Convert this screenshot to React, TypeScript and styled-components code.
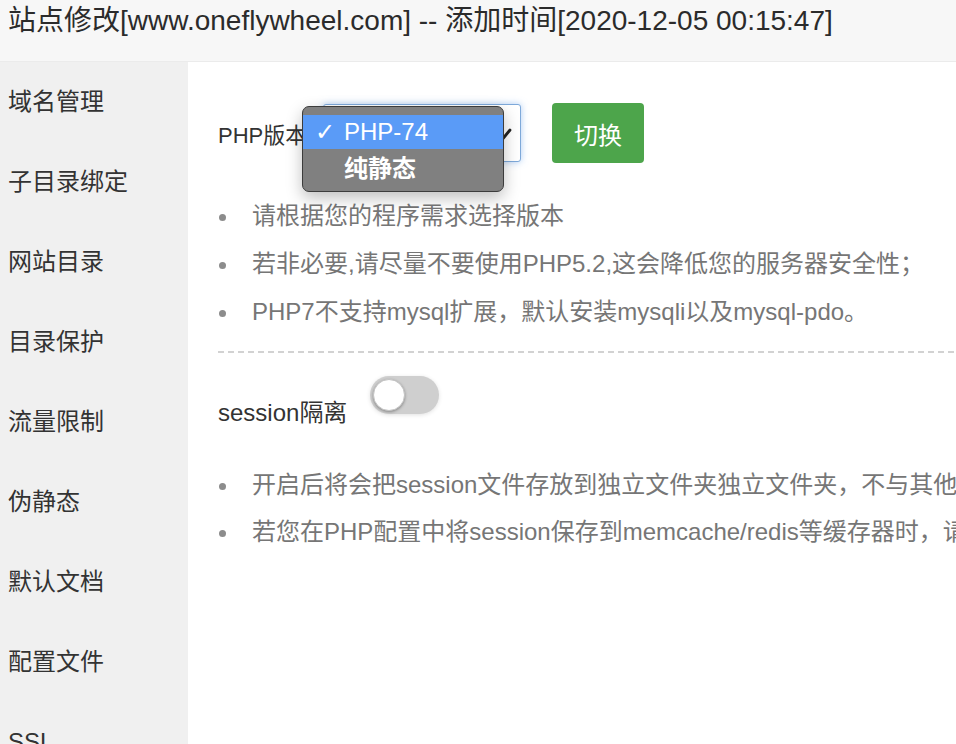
import React from "react";
import styled, { createGlobalStyle } from "styled-components";

const GlobalStyle = createGlobalStyle`
  html, body {
    margin: 0;
    padding: 0;
    background: #ffffff;
    overflow: hidden;
  }
  body {
    font-family: "Liberation Sans", Arial, "Noto Sans CJK SC", sans-serif;
    color: #333;
  }
  * {
    box-sizing: border-box;
  }
`;

const Page = styled.div`
  width: 956px;
  height: 744px;
  display: flex;
  flex-direction: column;
  overflow: hidden;
`;

const Header = styled.div`
  height: 62px;
  flex-shrink: 0;
  background: #f7f7f7;
  border-bottom: 1px solid #ebebeb;
  padding: 1px 0 0 8px;
`;

const Title = styled.h1`
  margin: 0;
  font-size: 28px;
  font-weight: normal;
  line-height: 40px;
  color: #2b2b2b;
  white-space: nowrap;
`;

const Body = styled.div`
  flex: 1;
  display: flex;
  min-height: 0;
`;

const Sidebar = styled.ul`
  width: 188px;
  flex-shrink: 0;
  margin: 0;
  padding: 0;
  list-style: none;
  background: #f0f0f0;
`;

const SideItem = styled.li`
  height: 80px;
  line-height: 80px;
  padding-left: 8px;
  font-size: 24px;
  color: #333;
  white-space: nowrap;
`;

const Content = styled.div`
  flex: 1;
  padding: 41px 0 0 30px;
  min-width: 0;
`;

const VersionRow = styled.div`
  display: flex;
  align-items: center;
`;

const Label = styled.span<{ $width?: number; $size?: number }>`
  font-size: ${(p) => p.$size ?? 24}px;
  color: #333;
  white-space: nowrap;
  ${(p) => (p.$width ? `width: ${p.$width}px;` : "")}
`;

const SelectBox = styled.div`
  position: relative;
  width: 198px;
  height: 58px;
  border: 1px solid #7ea9da;
  border-radius: 3px;
  box-shadow: 0 0 7px rgba(102, 160, 233, 0.55);
  background: #fff;
`;

const Chevron = styled.svg`
  position: absolute;
  right: 8px;
  top: 23px;
`;

const Popup = styled.div`
  position: absolute;
  left: -22px;
  top: 1px;
  width: 202px;
  height: 86px;
  padding: 8px 0;
  background: #808080;
  border: 1px solid #3c3c3c;
  border-radius: 7px;
  box-shadow: 0 6px 16px rgba(0, 0, 0, 0.25);
  z-index: 5;
`;

const Option = styled.div<{ $active?: boolean }>`
  height: 34px;
  display: flex;
  align-items: center;
  padding-left: 12px;
  font-size: 24px;
  color: #fff;
  background: ${(p) => (p.$active ? "#5a9bf7" : "transparent")};
  font-weight: ${(p) => (p.$active ? "normal" : "bold")};
  white-space: nowrap;
`;

const Check = styled.span`
  width: 29px;
  font-family: "DejaVu Sans", sans-serif;
  font-size: 24px;
`;

const SwitchButton = styled.button`
  margin-left: 31px;
  width: 92px;
  height: 60px;
  border: none;
  border-radius: 4px;
  background: #4da54b;
  color: #fff;
  font-family: inherit;
  font-size: 24px;
  cursor: pointer;
`;

const Tips = styled.ul<{ $line: number; $top?: number }>`
  margin: ${(p) => p.$top ?? 0}px 0 0;
  padding: 0;
  list-style: none;
  li {
    line-height: ${(p) => p.$line}px;
  }
`;

const Tip = styled.li`
  position: relative;
  padding-left: 34px;
  font-size: 24px;
  color: #767676;
  white-space: nowrap;
  &::before {
    content: "";
    position: absolute;
    left: 1px;
    top: 50%;
    width: 7px;
    height: 7px;
    margin-top: -2px;
    border-radius: 50%;
    background: #8c8c8c;
  }
`;

const Divider = styled.div`
  height: 2px;
  margin: 15px 0 24px;
  background: repeating-linear-gradient(
    to right,
    #d2d2d2 0,
    #d2d2d2 6px,
    transparent 6px,
    transparent 10px
  );
`;

const SessionRow = styled.div`
  display: flex;
  align-items: flex-start;
  margin-bottom: 32px;
`;

const SessionLabel = styled.span`
  margin-top: 20px;
  font-size: 24px;
  line-height: 32px;
  color: #333;
`;

const Toggle = styled.div<{ $on?: boolean }>`
  position: relative;
  margin-left: 23px;
  width: 69px;
  height: 38px;
  margin-top: -1px;
  border-radius: 19px;
  background: ${(p) => (p.$on ? "#20a53a" : "#cfcfcf")};
  box-shadow: 0 1px 4px rgba(0, 0, 0, 0.12);
`;

const Knob = styled.span`
  position: absolute;
  left: 3px;
  top: 3px;
  width: 32px;
  height: 32px;
  border-radius: 50%;
  background: #fff;
  border: 1px solid #c4c4c4;
  box-shadow: 0 1px 3px rgba(0, 0, 0, 0.35);
`;

const menu = [
  "域名管理",
  "子目录绑定",
  "网站目录",
  "目录保护",
  "流量限制",
  "伪静态",
  "默认文档",
  "配置文件",
  "SSL",
  "PHP版本",
];

const phpTips = [
  "请根据您的程序需求选择版本",
  "若非必要,请尽量不要使用PHP5.2,这会降低您的服务器安全性；",
  "PHP7不支持mysql扩展，默认安装mysqli以及mysql-pdo。",
];

const sessionTips = [
  "开启后将会把session文件存放到独立文件夹独立文件夹，不与其他站点公用存储位置",
  "若您在PHP配置中将session保存到memcache/redis等缓存器时，请不要开启此选项。",
];

const App = () => {
  return (
    <Page>
      <GlobalStyle />
      <Header>
        <Title>站点修改[www.oneflywheel.com] -- 添加时间[2020-12-05 00:15:47]</Title>
      </Header>
      <Body>
        <Sidebar>
          {menu.map((m) => (
            <SideItem key={m}>{m}</SideItem>
          ))}
        </Sidebar>
        <Content>
          <VersionRow>
            <Label $width={105} $size={22}>
              PHP版本
            </Label>
            <SelectBox>
              <Chevron width="22" height="15" viewBox="0 0 22 15">
                <path
                  d="M2 2 L11 13 L20 2"
                  fill="none"
                  stroke="#222"
                  strokeWidth="2.8"
                  strokeLinecap="round"
                  strokeLinejoin="round"
                />
              </Chevron>
              <Popup>
                <Option $active>
                  <Check>✓</Check>PHP-74
                </Option>
                <Option>
                  <Check />纯静态
                </Option>
              </Popup>
            </SelectBox>
            <SwitchButton>切换</SwitchButton>
          </VersionRow>

          <Tips $line={48} $top={29}>
            {phpTips.map((t) => (
              <Tip key={t}>{t}</Tip>
            ))}
          </Tips>

          <Divider />

          <SessionRow>
            <SessionLabel>session隔离</SessionLabel>
            <Toggle>
              <Knob />
            </Toggle>
          </SessionRow>

          <Tips $line={47}>
            {sessionTips.map((t) => (
              <Tip key={t}>{t}</Tip>
            ))}
          </Tips>
        </Content>
      </Body>
    </Page>
  );
};

export default App;
